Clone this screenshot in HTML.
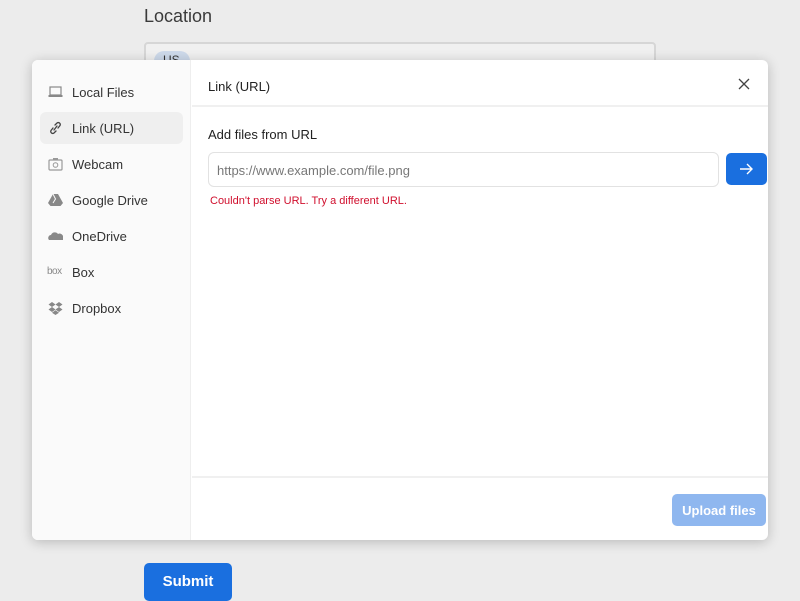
<!DOCTYPE html>
<html><head><meta charset="utf-8"><style>
*{box-sizing:border-box;margin:0;padding:0}
body{width:800px;height:600px;overflow:hidden;background:#ececec;font-family:"Liberation Sans",sans-serif;position:relative;color:#333}
.loc{position:absolute;left:144px;top:6px;font-size:18px;color:#3a3a3a}
.sel{position:absolute;left:144px;top:42px;width:512px;height:40px;border:2px solid #d6d6d6;border-radius:4px;background:#f0f0f0}
.chip{position:absolute;left:8px;top:7px;width:36px;height:20px;border-radius:10px;background:#cdd9ea;font-size:12px;color:#333;padding:2px 0 0 9px}
.chev{position:absolute;left:488px;top:8px;font-size:12px;color:#444}
.modal{position:absolute;left:32px;top:60px;width:736px;height:480px;background:#fff;border-radius:6px;box-shadow:0 2px 12px rgba(0,0,0,.22);overflow:hidden}
.side{position:absolute;left:0;top:0;width:159px;height:480px;background:#fafafa;border-right:1px solid #eee}
.item{position:absolute;left:8px;width:143px;height:32px;border-radius:6px;font-size:13px;color:#333;padding:9px 0 0 32px}
.item.act{background:#efefef}
.ic{position:absolute;left:8px;top:9px;width:15px;height:14px}
.main{position:absolute;left:160px;top:0;right:0;height:480px}
.hd{height:47px;border-bottom:2px solid #f0f0f0;font-size:13px;padding:19px 0 0 16px;color:#222}
.x{position:absolute;right:18px;top:18px;width:12px;height:12px}
.lbl{position:absolute;left:16px;top:67px;font-size:13px;color:#222}
.inp{position:absolute;left:16px;top:92px;width:511px;height:35px;border:1px solid #e2e2e2;border-radius:6px;font-size:13px;color:#777;padding:10px 0 0 8px}
.go{position:absolute;left:534px;top:93px;width:41px;height:32px;background:#1a6fdf;border-radius:5px}
.err{position:absolute;left:18px;top:135px;font-size:11px;color:#d00f2d}
.ft{position:absolute;left:0;right:0;top:416px;border-top:2px solid #f0f0f0}
.up{position:absolute;right:2px;top:434px;width:94px;height:32px;border-radius:5px;background:#8fb7ef;color:#fff;font-size:13px;font-weight:bold;text-align:center;padding-top:9px}
.sub{position:absolute;left:144px;top:563px;width:88px;height:38px;background:#1a6fdf;border-radius:5px;color:#fff;font-size:15px;font-weight:bold;text-align:center;padding-top:10px}
</style></head><body>
<div class="loc">Location</div>
<div class="sel"><div class="chip">US</div><div class="chev">&#8964;</div></div>
<div class="modal">
 <div class="side">
  <div class="item" style="top:16px"><svg class="ic" viewBox="0 0 15 14"><rect x="2" y="2" width="11" height="8" fill="none" stroke="#888" stroke-width="1.2"/><rect x="0.5" y="10" width="14" height="2" fill="#888"/></svg>Local Files</div>
  <div class="item act" style="top:52px"><svg class="ic" viewBox="0 0 15 14"><path d="M6 9 L9 5 M5 7 L3 9.5 a2 2 0 0 0 3 2.5 L8 10 M10 7 L12 4.5 a2 2 0 0 0 -3 -2.5 L7 4" fill="none" stroke="#444" stroke-width="1.3" stroke-linecap="round"/></svg>Link (URL)</div>
  <div class="item" style="top:88px"><svg class="ic" viewBox="0 0 15 14"><rect x="1" y="3" width="13" height="10" rx="1" fill="none" stroke="#999" stroke-width="1.2"/><rect x="5" y="1" width="5" height="2" fill="#999"/><circle cx="7.5" cy="8" r="2.3" fill="none" stroke="#999"/></svg>Webcam</div>
  <div class="item" style="top:124px"><svg class="ic" viewBox="0 0 15 14"><path d="M5 1 H10 L15 10 L12.5 13 H2.5 L0 10 Z" fill="#888"/><path d="M5 1 L7.5 6 L5 10" fill="none" stroke="#fafafa"/></svg>Google Drive</div>
  <div class="item" style="top:160px"><svg class="ic" viewBox="0 0 15 14"><path d="M1 11 a3 3 0 0 1 2 -5 a4 4 0 0 1 7 -1 a3.5 3.5 0 0 1 5 4 V11 Z" fill="#888"/></svg>OneDrive</div>
  <div class="item" style="top:196px"><span style="position:absolute;left:7px;top:10px;font-size:10px;color:#888;letter-spacing:-0.5px">box</span>Box</div>
  <div class="item" style="top:232px"><svg class="ic" viewBox="0 0 15 14"><path d="M4 1 L0.5 3.5 L4 6 L7.5 3.5 Z M11 1 L7.5 3.5 L11 6 L14.5 3.5 Z M4 6 L0.5 8.5 L4 11 L7.5 8.5 Z M11 6 L7.5 8.5 L11 11 L14.5 8.5 Z M4 11.7 L7.5 14 L11 11.7 L7.5 9.3 Z" fill="#888"/></svg>Dropbox</div>
 </div>
 <div class="main">
  <div class="hd">Link (URL)</div>
  <svg class="x" viewBox="0 0 12 12"><path d="M1 1 L11 11 M11 1 L1 11" stroke="#444" stroke-width="1.3"/></svg>
  <div class="lbl">Add files from URL</div>
  <div class="inp">https://www.example.com/file.png</div>
  <div class="go"><svg width="41" height="32" viewBox="0 0 41 32"><path d="M14 16 H26 M21 11 L26 16 L21 21" fill="none" stroke="#fff" stroke-width="1.4"/></svg></div>
  <div class="err">Couldn't parse URL. Try a different URL.</div>
  <div class="ft"></div>
  <div class="up">Upload files</div>
 </div>
</div>
<div class="sub">Submit</div>
</body></html>
